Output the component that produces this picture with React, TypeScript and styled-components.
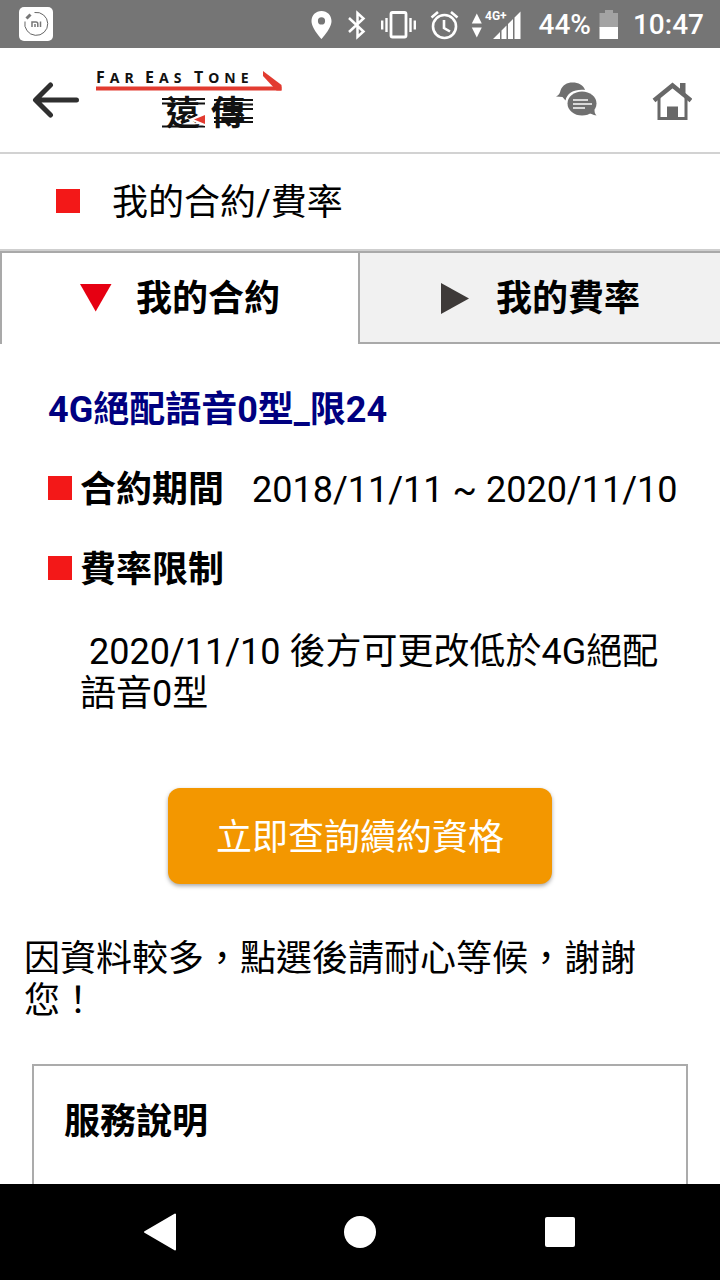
import React from "react";
import styled, { createGlobalStyle } from "styled-components";

const GlobalStyle = createGlobalStyle`
  *, *::before, *::after { box-sizing: border-box; }
  body {
    margin: 0;
    background: #fff;
    color: #000;
    font-family: Roboto, "Noto Sans CJK TC", sans-serif;
    font-size: 36px;
    line-height: 42px;
  }
  h1, h2, h3, p { margin: 0; font-size: inherit; font-weight: inherit; }
  button { font: inherit; color: inherit; border: 0; padding: 0; background: none; cursor: pointer; }
  svg { display: block; flex: none; }
`;

const Screen = styled.div`
  display: flex;
  flex-direction: column;
  height: 100vh;
  overflow: hidden;
`;

const StatusBar = styled.div`
  display: flex;
  align-items: center;
  flex: none;
  height: 48px;
  padding: 2px 16px 0 18px;
  background: #757575;
  color: #fff;
  font-size: 28px;
  font-weight: 500;
  line-height: 46px;
`;

const StatusIcons = styled.div`
  display: flex;
  align-items: center;
  gap: 12px;
  margin-left: auto;
  margin-right: 16px;
`;

const Battery = styled.div`
  display: flex;
  align-items: center;
  gap: 8px;
  margin-right: 14px;
`;

const Header = styled.header`
  display: flex;
  align-items: center;
  flex: none;
  height: 106px;
  padding: 0 28px 0 32px;
  border-bottom: 2px solid #d2d2d2;
`;

const LogoLink = styled.a`
  margin-left: 16px;
  margin-right: auto;
`;

const IconButton = styled.button<{ $gap?: number }>`
  display: flex;
  align-items: center;
  margin-right: ${(p) => p.$gap ?? 0}px;
`;

const Content = styled.main`
  flex: 1;
  min-height: 0;
  overflow-y: auto;
  scrollbar-width: none;
`;

const PageTitle = styled.h1`
  display: flex;
  align-items: center;
  gap: 32px;
  height: 97px;
  padding: 2px 0 0 56px;
  border-bottom: 2px solid #cfcfcf;
`;

const Bullet = styled.span`
  flex: none;
  width: 24px;
  height: 24px;
  margin-bottom: 4px;
  background: #f31818;
`;

const Tabs = styled.div`
  display: flex;
  height: 93px;
`;

const Tab = styled.button<{ $active?: boolean }>`
  display: flex;
  flex: ${(p) => (p.$active ? "0 0 calc(50% - 2px)" : "1")};
  align-items: center;
  justify-content: center;
  gap: 24px;
  padding-top: ${(p) => (p.$active ? 0 : 2)}px;
  border: solid #a9a9a9;
  border-width: ${(p) => (p.$active ? "2px 0 0 2px" : "2px 0 2px 2px")};
  background: ${(p) => (p.$active ? "#fff" : "#f1f1f1")};
  font-weight: 700;
`;

const Contract = styled.section`
  padding: 45px 48px 0;
`;

const PlanName = styled.h2`
  color: #000080;
  font-weight: 700;
`;

const Term = styled.div`
  display: flex;
  align-items: center;
  gap: 8px;
  margin-top: 38px;
`;

const TermLabel = styled.h3`
  font-weight: 700;
  white-space: nowrap;
`;

const TermValue = styled.p`
  margin-left: 20px;
  white-space: nowrap;
`;

const Restriction = styled.p`
  margin-top: 40px;
  padding-left: 32px;
`;

const RenewButton = styled.button`
  display: block;
  width: 384px;
  max-width: 100%;
  height: 96px;
  margin: 73px auto 0;
  padding-top: 4px;
  border-radius: 12px;
  background: #f39700;
  box-shadow: 0 2px 4px rgba(0, 0, 0, 0.35);
  color: #fff;
`;

const Note = styled.p`
  margin-top: 54px;
  padding: 0 24px;
`;

const ServiceBox = styled.section`
  min-height: 240px;
  margin: 42px 32px 32px;
  padding: 35px 30px;
  border: 2px solid #ababab;
  font-weight: 700;
`;

const NavBar = styled.nav`
  display: flex;
  align-items: center;
  justify-content: center;
  gap: 160px;
  flex: none;
  height: 96px;
  background: #000;
`;

const NavButton = styled.button`
  display: flex;
  align-items: center;
  justify-content: center;
  width: 40px;
  height: 40px;
`;

const MiIcon = () => (
  <svg width="36" height="36" viewBox="0 0 36 36" aria-hidden="true">
    <rect x="1" y="0" width="34" height="34" rx="5" fill="#fff" />
    <path d="M16.500 5.500a11.500 11.500 0 1 1-9.500 9" fill="none" stroke="#666" strokeWidth="1" />
    <path d="M8.500 11.500l4-4" stroke="#777" strokeWidth="3" />
    <path d="M14 20v-5h4q1.800 0 1.800 1.800v3.200M17 17v3M22.500 14.500v5.500" fill="none" stroke="#777" strokeWidth="1.500" />
  </svg>
);

const PinIcon = () => (
  <svg width="24" height="30" viewBox="0 0 24 30" aria-hidden="true">
    <path fillRule="evenodd" fill="#fff" d="M10.500 1C4.800 1 .5 5.300.5 11c0 7.500 10 18 10 18s10-10.500 10-18c0-5.700-4.300-10-10-10zm0 6.300a3.600 3.600 0 1 1 0 7.200 3.600 3.600 0 0 1 0-7.200z" />
  </svg>
);

const BluetoothIcon = () => (
  <svg width="20" height="30" viewBox="0 0 20 30" aria-hidden="true">
    <path d="M2 8l14.500 13.500-6 5.500V3l6 5.500L2 22" fill="none" stroke="#fff" strokeWidth="2.500" />
  </svg>
);

const VibrateIcon = () => (
  <svg width="38" height="30" viewBox="0 0 38 30" aria-hidden="true">
    <rect x="12" y="2.500" width="15" height="24.500" rx="1.500" fill="none" stroke="#fff" strokeWidth="2.800" />
    <path d="M3.200 10.500v9M7.500 8v14M31.500 8v14M35.800 10.500v9" stroke="#fff" strokeWidth="2.400" />
  </svg>
);

const AlarmIcon = () => (
  <svg width="30" height="30" viewBox="0 0 30 30" aria-hidden="true">
    <g fill="none" stroke="#fff" strokeWidth="2.600">
      <circle cx="15.500" cy="16.500" r="11.500" />
      <path d="M15 10v8l6 3.500M2.500 7.500L9 2M28.500 7.500L22 2" />
    </g>
  </svg>
);

const NetworkIcon = () => (
  <svg width="52" height="32" viewBox="0 0 52 32" role="img" aria-label="4G+">
    <path fill="#fff" d="M.8 14.500L5.800 4.500l5 10zM.8 18.500h10l-5 10z" />
    <path fill="#fff" d="M22 30l7-7v7zM30.500 21.500l5-5V30h-5zM37 15l5-5v20h-5zM43.500 8.500l6-6V30h-6z" />
    <text x="14" y="11" fontSize="12" fontWeight="700" fontFamily="Roboto, sans-serif" fill="#fff" stroke="#757575" strokeWidth="2" paintOrder="stroke">4G+</text>
  </svg>
);

const BatteryIcon = () => (
  <svg width="20" height="30" viewBox="0 0 20 30" aria-hidden="true">
    <path fill="#a3a3a3" d="M6 0h8v3h5v15H.5V3H6z" />
    <path fill="#fff" d="M.5 17H19v12H.5z" />
  </svg>
);

const BackIcon = () => (
  <svg width="48" height="40" viewBox="0 0 48 40" aria-hidden="true">
    <path d="M18.500 5L3.500 20l15 15M4 20h40.500" fill="none" stroke="#303030" strokeWidth="5" strokeLinecap="round" strokeLinejoin="round" />
  </svg>
);

const CompanyLogo = () => (
  <svg width="188" height="76" viewBox="0 -4 188 76" role="img" aria-label="FarEasTone 遠傳">
    <g fill="#111" fontFamily='"Noto Sans", sans-serif' fontWeight="700">
      <text y="17" fontSize="14" letterSpacing="5">
        <tspan x="0" fontSize="16">F</tspan>AR
        <tspan x="49" fontSize="16">E</tspan>AS
        <tspan x="98" fontSize="16">T</tspan>ONE
      </text>
    </g>
    <path d="M0 22.500h185.500" stroke="#e23b30" strokeWidth="4" />
    <path d="M167 5l18.500 14v5.500h-5L167 10z" fill="#e23b30" />
    <path d="M66 33h43M66 37.500h43M118 34h39M118 38.500h39M118 43h39M66 60.500h43M118 52h39M118 56h39" stroke="#111" strokeWidth="2" />
    <g fill="#111" fontFamily='"Noto Sans CJK TC", sans-serif' fontWeight="700" fontSize="34">
      <text x="70" y="59">遠</text>
      <text x="115" y="59">傳</text>
    </g>
    <path d="M92 53.500l17-6.500v13z" fill="#fff" />
    <path d="M98 53.500l11-4.500v9z" fill="#e23b30" />
  </svg>
);

const ChatIcon = () => (
  <svg width="44" height="40" viewBox="0 0 44 40" aria-hidden="true">
    <path fill="#707070" d="M0 16.500c2.500-1 4-3 4.500-6C6.500 5 11 2.500 16.500 2.500 22.500 2.500 27.500 5 29 10 18.500 9 11 13 9.500 20.500L6.500 17z" />
    <ellipse cx="26" cy="23.500" rx="14.500" ry="12" fill="#707070" />
    <path fill="#707070" d="M31 33c3 0 6 2 9.500 2.500-2-2-2-4-2-6z" />
    <path d="M17 20h15M17 24h19M17 28h12" stroke="#d8d8d8" strokeWidth="2.200" />
  </svg>
);

const HomeIcon = () => (
  <svg width="40" height="44" viewBox="0 0 40 44" aria-hidden="true">
    <path d="M7 20v20.500h27V20" fill="none" stroke="#686868" strokeWidth="3" />
    <path d="M2 22.500L20.500 7.500 39 22.500" fill="none" stroke="#686868" strokeWidth="4.500" />
    <path fill="#686868" d="M28 5h5.500v12L28 12zM15 28.500h11V41H15z" />
  </svg>
);

const DownArrow = () => (
  <svg width="32" height="32" viewBox="0 0 32 32" aria-hidden="true">
    <path fill="#e60012" d="M0 1h31.500L15.700 28.500z" />
  </svg>
);

const RightArrow = () => (
  <svg width="32" height="32" viewBox="0 0 32 32" aria-hidden="true">
    <path fill="#3e3a39" d="M1 0L29 15.500 1 31z" />
  </svg>
);

export default function App() {
  return (
    <Screen lang="zh-Hant-TW">
      <GlobalStyle />
      <StatusBar>
        <MiIcon />
        <StatusIcons>
          <PinIcon />
          <BluetoothIcon />
          <VibrateIcon />
          <AlarmIcon />
          <NetworkIcon />
        </StatusIcons>
        <Battery>
          <span>44%</span>
          <BatteryIcon />
        </Battery>
        <time>10:47</time>
      </StatusBar>

      <Header>
        <IconButton aria-label="返回"><BackIcon /></IconButton>
        <LogoLink href="#home"><CompanyLogo /></LogoLink>
        <IconButton aria-label="客服" $gap={52}><ChatIcon /></IconButton>
        <IconButton aria-label="首頁"><HomeIcon /></IconButton>
      </Header>

      <Content>
        <PageTitle><Bullet />我的合約/費率</PageTitle>

        <Tabs role="tablist">
          <Tab role="tab" aria-selected="true" $active><DownArrow />我的合約</Tab>
          <Tab role="tab" aria-selected="false"><RightArrow />我的費率</Tab>
        </Tabs>

        <Contract>
          <PlanName>4G絕配語音0型_限24</PlanName>
          <Term>
            <Bullet />
            <TermLabel>合約期間</TermLabel>
            <TermValue>2018/11/11 ~ 2020/11/10</TermValue>
          </Term>
          <Term>
            <Bullet />
            <TermLabel>費率限制</TermLabel>
          </Term>
          <Restriction>{"\u00a0"}2020/11/10 後方可更改低於4G絕配語音0型</Restriction>
        </Contract>

        <RenewButton>立即查詢續約資格</RenewButton>
        <Note>因資料較多，點選後請耐心等候，謝謝您！</Note>

        <ServiceBox>
          <h2>服務說明</h2>
        </ServiceBox>
      </Content>

      <NavBar>
        <NavButton aria-label="返回上一頁">
          <svg width="40" height="40" viewBox="0 0 40 40" aria-hidden="true">
            <path d="M35 2.500v35L5 20z" fill="#fff" stroke="#fff" strokeWidth="2" strokeLinejoin="round" />
          </svg>
        </NavButton>
        <NavButton aria-label="主畫面">
          <svg width="32" height="32" viewBox="0 0 32 32" aria-hidden="true">
            <circle cx="16" cy="16" r="16" fill="#fff" />
          </svg>
        </NavButton>
        <NavButton aria-label="最近使用">
          <svg width="30" height="30" viewBox="0 0 30 30" aria-hidden="true">
            <rect width="30" height="30" rx="2" fill="#fff" />
          </svg>
        </NavButton>
      </NavBar>
    </Screen>
  );
}
